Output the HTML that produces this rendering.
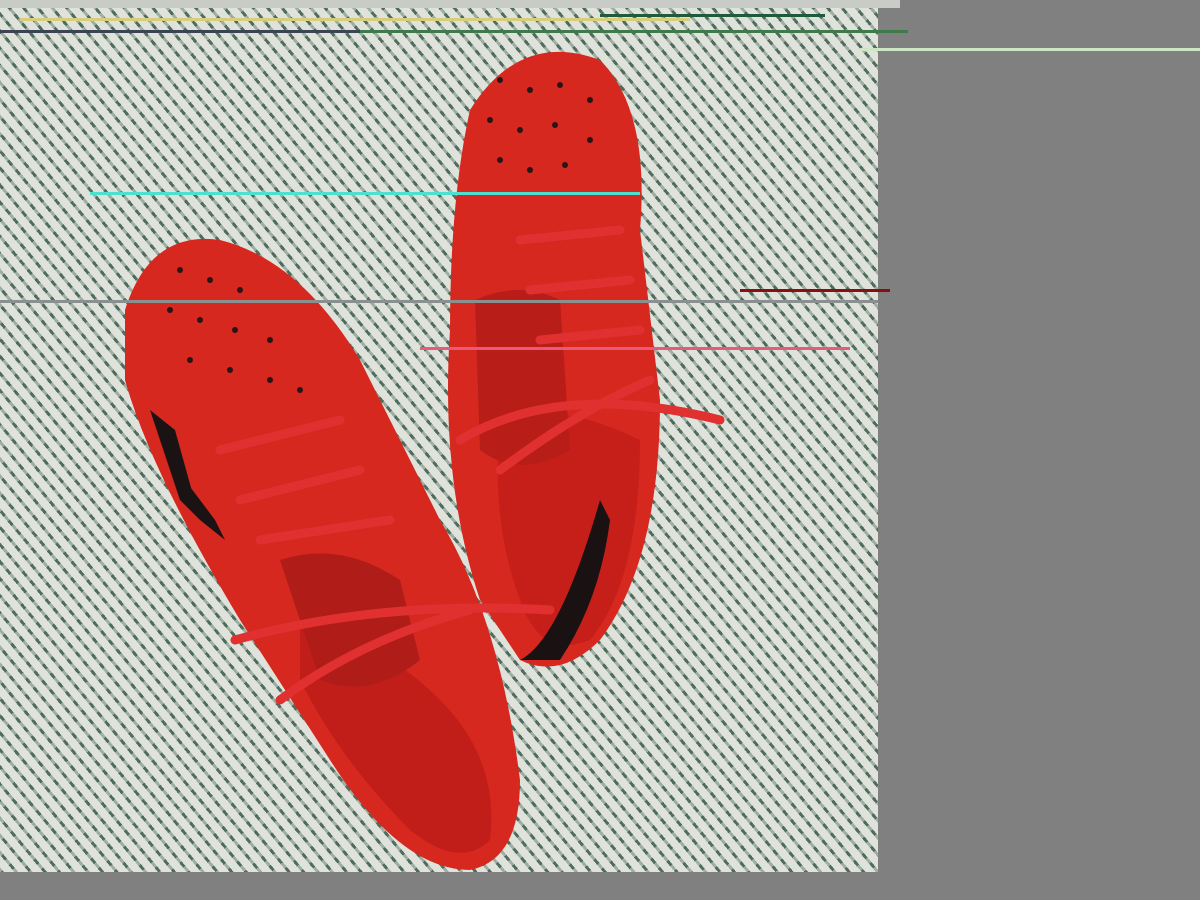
<!DOCTYPE html>
<html><head><style>
html,body{margin:0;padding:0;width:1200px;height:900px;overflow:hidden;background:#808080}
#photo{position:absolute;left:0;top:8px;width:878px;height:864px;background:#c3cbc3;
background-image:repeating-linear-gradient(50deg,#4f6d5e 0 3px,#dfe2da 3px 11px);}
#photo2{position:absolute;left:0;top:8px;width:878px;height:864px;
background-image:repeating-linear-gradient(-40deg,rgba(225,228,220,.55) 0 6px,rgba(225,228,220,0) 6px 12px);}
.l{position:absolute;height:3px}
</style></head><body>
<div id="photo"></div><div id="photo2"></div>
<svg style="position:absolute;left:0;top:0" width="1200" height="900">
<g>
<path d="M470 110 Q520 30 600 60 Q650 110 640 230 L660 400 Q660 560 600 640 Q560 680 520 660 L480 600 Q440 480 450 330 Q450 200 470 110Z" fill="#d6281f"/>
<path d="M500 420 Q560 400 640 440 Q640 580 590 640 Q540 660 520 600 Q490 520 500 420Z" fill="#c61f1a"/>
<path d="M475 300 Q520 280 560 300 L570 450 Q520 480 480 450Z" fill="#b81d18"/>
<path d="M600 500 L610 520 Q600 600 560 660 L520 660 Q560 640 600 500Z" fill="#1a1212"/>
</g>
<g>
<path d="M125 310 Q150 230 220 240 Q300 260 360 360 L440 520 Q500 620 520 780 Q520 860 470 870 Q400 870 330 760 L240 620 Q150 470 125 380Z" fill="#d6281f"/>
<path d="M300 620 Q380 640 440 700 Q500 760 490 840 Q460 870 410 830 Q340 760 300 680Z" fill="#c21e19"/>
<path d="M280 560 Q340 540 400 580 L420 660 Q370 700 320 680Z" fill="#b01c18"/>
<path d="M150 410 L175 430 L200 520 L180 500Z M185 480 L215 520 L225 540 L200 520Z" fill="#1b1313"/>
</g>
<g stroke="#e03030" stroke-width="9" fill="none" stroke-linecap="round">
<path d="M235 640 Q380 600 550 610"/>
<path d="M280 700 Q360 640 470 610"/>
<path d="M460 440 Q560 380 720 420"/>
<path d="M500 470 Q580 410 650 380"/>
<path d="M220 450 L340 420 M240 500 L360 470 M260 540 L390 520"/>
<path d="M520 240 L620 230 M530 290 L630 280 M540 340 L640 330"/>
</g>
<g fill="#2a1414">
<circle cx="500" cy="80" r="3"/><circle cx="530" cy="90" r="3"/><circle cx="560" cy="85" r="3"/><circle cx="590" cy="100" r="3"/>
<circle cx="490" cy="120" r="3"/><circle cx="520" cy="130" r="3"/><circle cx="555" cy="125" r="3"/><circle cx="590" cy="140" r="3"/>
<circle cx="500" cy="160" r="3"/><circle cx="530" cy="170" r="3"/><circle cx="565" cy="165" r="3"/>
<circle cx="180" cy="270" r="3"/><circle cx="210" cy="280" r="3"/><circle cx="240" cy="290" r="3"/><circle cx="170" cy="310" r="3"/>
<circle cx="200" cy="320" r="3"/><circle cx="235" cy="330" r="3"/><circle cx="270" cy="340" r="3"/><circle cx="190" cy="360" r="3"/>
<circle cx="230" cy="370" r="3"/><circle cx="270" cy="380" r="3"/><circle cx="300" cy="390" r="3"/>
</g>
</svg>
<div class="l" style="left:0;top:0;width:900px;height:8px;background:#c9ccc6"></div>
<div class="l" style="left:20px;top:18px;width:670px;background:#d8cd7a"></div>
<div class="l" style="left:600px;top:14px;width:225px;background:#1f5a3a"></div>
<div class="l" style="left:0;top:30px;width:360px;background:#3b4452"></div>
<div class="l" style="left:360px;top:30px;width:548px;background:#3e7a4a"></div>
<div class="l" style="left:860px;top:48px;width:340px;background:#cfe6c4"></div>
<div class="l" style="left:90px;top:192px;width:550px;background:#4de0d0"></div>
<div class="l" style="left:0;top:300px;width:878px;background:#8a8f90"></div>
<div class="l" style="left:740px;top:289px;width:150px;background:#8a1010"></div>
<div class="l" style="left:420px;top:347px;width:430px;background:#e85a7a"></div>
</body></html>
